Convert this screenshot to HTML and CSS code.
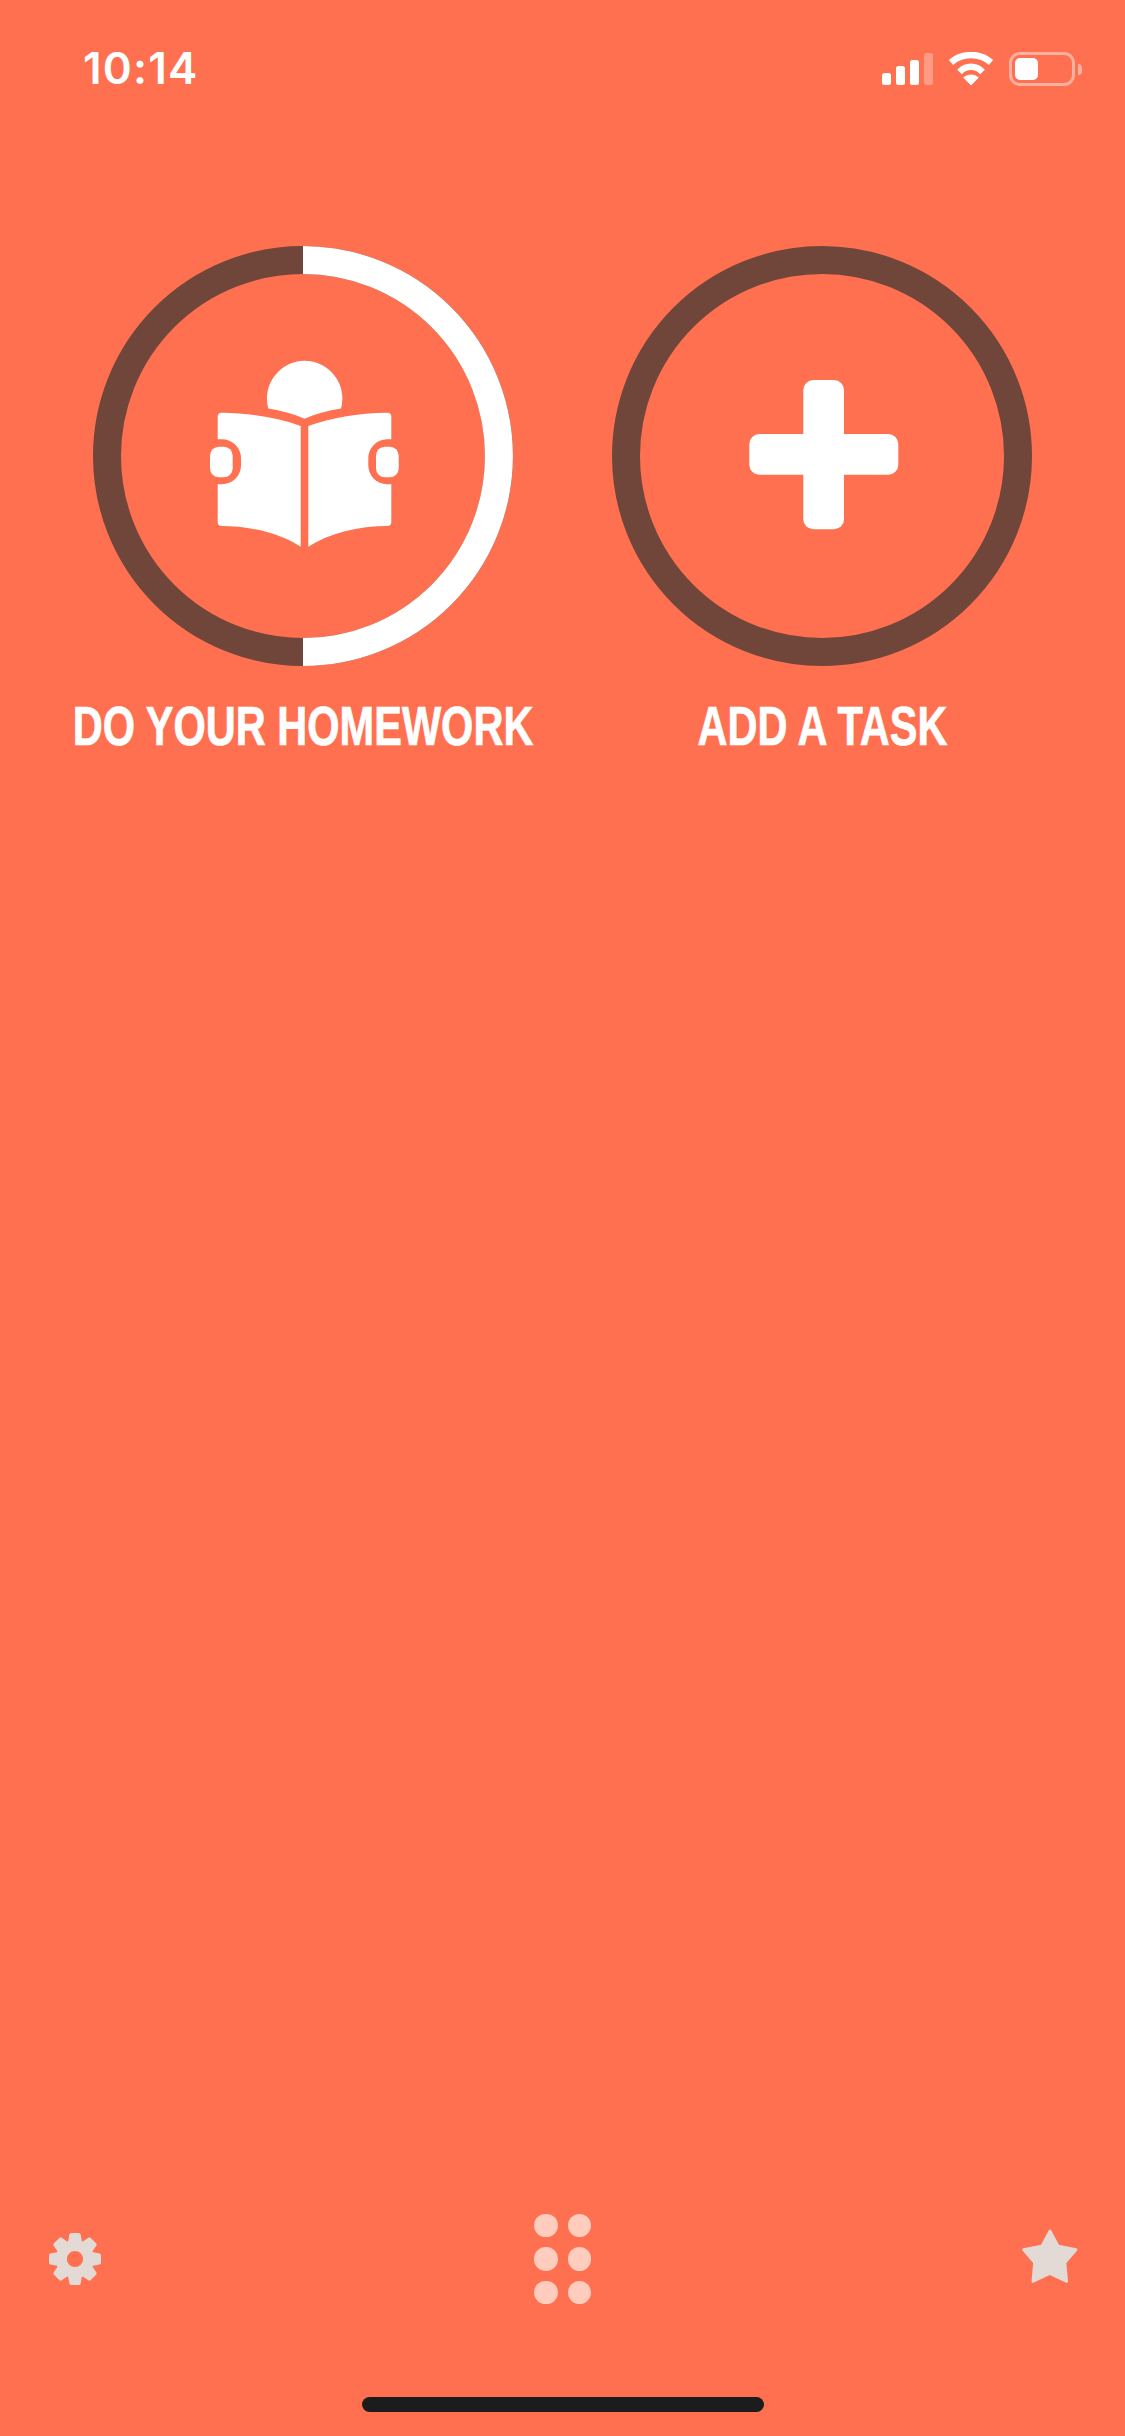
FILE: index.html
```html
<!DOCTYPE html>
<html lang="en">
<head>
<meta charset="utf-8">
<title>Tasks</title>
<link rel="stylesheet" href="styles.css">
</head>
<body>
<main class="screen">
  <header class="status">
    <span class="time">10:14</span>
    <div class="status-icons">
      <div class="signal">
        <i class="bar bar-1"></i><i class="bar bar-2"></i><i class="bar bar-3"></i><i class="bar bar-4"></i>
      </div>
      <svg class="wifi" width="46" height="33" viewBox="948 52 46 33">
        <path d="M971 85 L963.8 77.6 C968 74.2 974 74.2 978.2 77.6 Z" fill="#fff" stroke="#fff" stroke-width="1" stroke-linejoin="round"/>
        <path d="M951 62.5 C962 52.5 980 52.5 991 62.5" fill="none" stroke="#fff" stroke-width="6.5"/>
        <path d="M959.5 72 C966 65 976 65 982.5 72" fill="none" stroke="#fff" stroke-width="6.5"/>
      </svg>
      <div class="battery">
        <div class="battery-case"><div class="battery-level"></div></div>
        <div class="battery-nub"></div>
      </div>
    </div>
  </header>

  <section class="tiles">
    <article class="tile">
      <svg class="ring" width="420" height="420" viewBox="93 246 420 420">
        <circle cx="303" cy="456" r="196" fill="none" stroke="#70463a" stroke-width="28"/>
        <path d="M303 260 A196 196 0 0 1 303 652" fill="none" stroke="#fff" stroke-width="28"/>
        <g fill="#fff">
          <path d="M268.3 408.5 A37.7 37.7 0 1 1 341 408.5 C328 410.7 316 413.7 304.5 418.8 C293 413.7 281 410.7 268.3 408.5 Z"/>
          <path d="M217.7 416.7 A4 4 0 0 1 221.7 412.7 C250 413 280 418 300.7 426 V546.7 C280 533 250 526 221.7 526 A4 4 0 0 1 217.7 522 V484.3 H222 A19 19 0 0 0 241 465.3 V458.3 A19 19 0 0 0 222 439.3 H217.7 Z"/>
          <path d="M391.3 416.7 A4 4 0 0 0 387.3 412.7 C359 413 329 418 308.3 426 V546.7 C329 533 359 526 387.3 526 A4 4 0 0 0 391.3 522 V484.3 H387 A19 19 0 0 1 368.3 465.3 V458.3 A19 19 0 0 1 387 439.3 H391.3 Z"/>
          <rect x="210" y="446.7" width="22.7" height="30.6" rx="9"/>
          <rect x="376" y="446.7" width="22.7" height="30.6" rx="9"/>
        </g>
      </svg>
      <h2 class="label">DO YOUR HOMEWORK</h2>
    </article>
    <article class="tile">
      <svg class="ring" width="420" height="420" viewBox="612 246 420 420">
        <circle cx="822" cy="456" r="196" fill="none" stroke="#70463a" stroke-width="28"/>
        <g fill="#fff">
          <rect x="803.3" y="380" width="40.7" height="149.3" rx="10"/>
          <rect x="749.3" y="434" width="149" height="40.7" rx="10"/>
        </g>
      </svg>
      <h2 class="label">ADD A TASK</h2>
    </article>
  </section>

  <footer class="toolbar">
    <svg class="gear" width="52" height="52" viewBox="-26 -26 52 52">
      <circle r="13.6" fill="none" stroke="#e3d9d5" stroke-width="11"/>
      <g fill="#e3d9d5">
        <path d="M-7 -17 L-5.6 -24.5 Q-5.3 -26 -3.8 -26 H3.8 Q5.3 -26 5.6 -24.5 L7 -17 Z"/>
        <path transform="rotate(45)" d="M-7 -17 L-5.6 -24.5 Q-5.3 -26 -3.8 -26 H3.8 Q5.3 -26 5.6 -24.5 L7 -17 Z"/>
        <path transform="rotate(90)" d="M-7 -17 L-5.6 -24.5 Q-5.3 -26 -3.8 -26 H3.8 Q5.3 -26 5.6 -24.5 L7 -17 Z"/>
        <path transform="rotate(135)" d="M-7 -17 L-5.6 -24.5 Q-5.3 -26 -3.8 -26 H3.8 Q5.3 -26 5.6 -24.5 L7 -17 Z"/>
        <path transform="rotate(180)" d="M-7 -17 L-5.6 -24.5 Q-5.3 -26 -3.8 -26 H3.8 Q5.3 -26 5.6 -24.5 L7 -17 Z"/>
        <path transform="rotate(225)" d="M-7 -17 L-5.6 -24.5 Q-5.3 -26 -3.8 -26 H3.8 Q5.3 -26 5.6 -24.5 L7 -17 Z"/>
        <path transform="rotate(270)" d="M-7 -17 L-5.6 -24.5 Q-5.3 -26 -3.8 -26 H3.8 Q5.3 -26 5.6 -24.5 L7 -17 Z"/>
        <path transform="rotate(315)" d="M-7 -17 L-5.6 -24.5 Q-5.3 -26 -3.8 -26 H3.8 Q5.3 -26 5.6 -24.5 L7 -17 Z"/>
      </g>
    </svg>
    <div class="dots">
      <i class="dot"></i><i class="dot"></i>
      <i class="dot"></i><i class="dot"></i>
      <i class="dot"></i><i class="dot"></i>
    </div>
    <svg class="star" width="56" height="66" viewBox="1022 2226 56 66">
      <path d="M1050 2230.8 L1058.3 2246 L1076.2 2249.6 L1065 2262.7 L1066.8 2281.5 L1049.7 2273.5 L1032.8 2281.5 L1034.5 2262.7 L1023.5 2249.6 L1041.7 2246 Z" fill="#e3d9d5" stroke="#e3d9d5" stroke-width="2.6" stroke-linejoin="round"/>
    </svg>
  </footer>

  <div class="home-indicator"></div>
</main>
</body>
</html>
```
FILE: styles.css
```css
* {
  box-sizing: border-box;
}

html,
body {
  margin: 0;
  padding: 0;
}

body {
  background: #ff7050;
  font-family: "Inter", "Liberation Sans", sans-serif;
  color: #fff;
}

.screen {
  display: flex;
  flex-direction: column;
  width: 1125px;
  height: 2436px;
  overflow: hidden;
}

.status {
  display: flex;
  justify-content: space-between;
  align-items: flex-start;
  height: 246px;
  padding: 52px 43px 0 83px;
}

.time {
  font-size: 44px;
  font-weight: 600;
  line-height: 33px;
  letter-spacing: 1.2px;
}

.status-icons {
  display: flex;
  align-items: flex-start;
}

.signal {
  display: flex;
  align-items: flex-end;
  gap: 5px;
  height: 33px;
  margin-right: 15px;
}

.bar {
  display: block;
  width: 9px;
  background: #fff;
  border-radius: 2.5px;
}

.bar-1 { height: 12px; }
.bar-2 { height: 19px; }
.bar-3 { height: 25px; }
.bar-4 { height: 32px; background: rgba(255, 255, 255, 0.3); }

.wifi {
  display: block;
  margin-right: 15px;
}

.battery {
  display: flex;
  align-items: center;
  gap: 3px;
}

.battery-case {
  width: 66px;
  height: 34px;
  padding: 3px;
  border: 3px solid rgba(255, 255, 255, 0.45);
  border-radius: 11px;
}

.battery-level {
  width: 23px;
  height: 22px;
  background: #fff;
  border-radius: 5px;
}

.battery-nub {
  width: 4px;
  height: 11px;
  background: rgba(255, 255, 255, 0.45);
  border-radius: 0 4px 4px 0;
}

.tiles {
  display: grid;
  grid-template-columns: 480px 480px;
  column-gap: 39px;
  padding-left: 63px;
}

.tile {
  display: flex;
  flex-direction: column;
  align-items: center;
}

.ring {
  display: block;
}

.label {
  margin: 30px 0 0;
  font-family: "Liberation Sans", sans-serif;
  font-size: 55px;
  font-weight: 700;
  line-height: 60px;
  white-space: nowrap;
  -webkit-text-stroke: 0.7px #fff;
  transform: scaleX(0.755);
}

.toolbar {
  display: flex;
  justify-content: space-between;
  align-items: center;
  margin-top: auto;
  padding: 0 47px 0 49px;
}

.gear,
.star {
  display: block;
}

.dots {
  display: grid;
  grid-template-columns: 23.4px 23.4px;
  gap: 10px;
  transform: translateX(1px);
}

.dot {
  display: block;
  width: 23.4px;
  height: 23.4px;
  background: #ffccbe;
  border-radius: 50%;
}

.home-indicator {
  align-self: center;
  width: 402px;
  height: 15px;
  margin-top: 93px;
  margin-bottom: 24px;
  background: #1c1c1c;
  border-radius: 8px;
}
```
